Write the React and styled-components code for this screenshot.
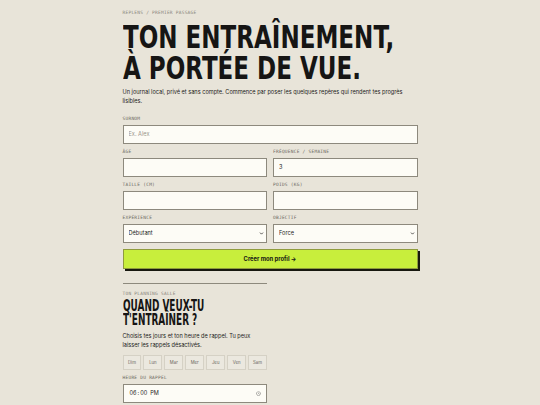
import React from "react";
import styled, { createGlobalStyle } from "styled-components";
import { ChevronDown } from "lucide-react";

const Global = createGlobalStyle`
  html, body { margin: 0; padding: 0; background: #e8e4d9; }
  body { font-family: "Inter", "Noto Sans", sans-serif; color: #161514; }
  * { box-sizing: border-box; }
`;

const Page = styled.main`
  width: 295px;
  margin: 0 auto;
  padding: 10px 0 0;
  display: flex;
  flex-direction: column;
`;

const Eyebrow = styled.div`
  font-family: "DejaVu Sans Mono", "Liberation Mono", monospace;
  font-size: 4.5px;
  line-height: 6px;
  letter-spacing: 0.25px;
  text-transform: uppercase;
  color: ${(p) => p.$color || "#8a867c"};
`;

const Title = styled.h1`
  margin: ${(p) => p.$margin || "0"};
  font-family: "DejaVu Sans Condensed", "DejaVu Sans", sans-serif;
  font-stretch: condensed;
  font-weight: 700;
  font-size: ${(p) => p.$size}px;
  line-height: ${(p) => p.$lh}px;
  white-space: nowrap;
  color: #161514;
  transform: scaleX(${(p) => p.$scale});
  transform-origin: left top;
`;

const Lead = styled.p`
  margin: ${(p) => p.$margin || "0"};
  font-size: 5.6px;
  line-height: 9px;
  color: #1d1c1a;
`;

const Form = styled.form`
  display: grid;
  grid-template-columns: 1fr 1fr;
  column-gap: 6px;
  row-gap: 5px;
  margin-top: 9.5px;
`;

const Field = styled.label`
  display: flex;
  flex-direction: column;
  gap: 3px;
  grid-column: ${(p) => (p.$full ? "1 / -1" : "auto")};
`;

const boxStyles = `
  height: 19px;
  width: 100%;
  border: 1px solid #8d897d;
  background: #fdfcf6;
  font-family: "Inter", "Noto Sans", sans-serif;
  font-size: 5.6px;
  color: #1d1c1a;
  padding: 0 5px;
  border-radius: 0;
  outline: none;
  margin: 0;
`;

const Input = styled.input`
  ${boxStyles}
  &::placeholder { color: #9a968b; }
`;

const SelectWrap = styled.div`
  position: relative;
  display: flex;
`;

const Select = styled.select`
  ${boxStyles}
  appearance: none;
  -webkit-appearance: none;
  padding: 0 10px 0 5px;
`;

const Chevron = styled(ChevronDown)`
  position: absolute;
  right: 3px;
  top: 7px;
  width: 5px;
  height: 5px;
  color: #1d1c1a;
  pointer-events: none;
`;

const TimeInput = styled.input`
  ${boxStyles}
  &::-webkit-calendar-picker-indicator {
    width: 5px;
    height: 5px;
    margin: 0;
    padding: 0;
    opacity: 0.7;
  }
  &::-webkit-datetime-edit { padding: 0; }
`;

const Submit = styled.button`
  grid-column: 1 / -1;
  margin-top: 1px;
  height: 20px;
  border: 1px solid #8f9b3d;
  background: #c8ee3c;
  box-shadow: 2px 2px 0 #17170f;
  font-family: "Inter", "Noto Sans", sans-serif;
  font-weight: 700;
  font-size: 5.8px;
  color: #161514;
  cursor: pointer;
`;

const Rule = styled.hr`
  width: calc(50% - 3px);
  margin: 14px 0 7px;
  border: 0;
  border-top: 1px solid #8d897d;
`;

const Section = styled.section`
  width: calc(50% - 3px);
  display: flex;
  flex-direction: column;
`;

const Days = styled.div`
  display: grid;
  grid-template-columns: repeat(7, 1fr);
  gap: 2px;
  margin-top: 5px;
`;

const Day = styled.button`
  height: 15px;
  padding: 0;
  border: 1px solid #d5d1c5;
  background: #ebe8df;
  font-family: "Inter", "Noto Sans", sans-serif;
  font-size: 4.3px;
  color: #6a665d;
`;

const TimeField = styled.label`
  display: flex;
  flex-direction: column;
  gap: 3px;
  margin-top: 5px;
`;

function SelectBox({ defaultValue, children }) {
  return (
    <SelectWrap>
      <Select defaultValue={defaultValue}>{children}</Select>
      <Chevron strokeWidth={3.5} />
    </SelectWrap>
  );
}

export default function App() {
  return (
    <>
      <Global />
      <Page>
        <Eyebrow>Replens / premier passage</Eyebrow>
        <Title $size={32} $lh={31} $scale={0.8} $margin="6px 0 0">
          TON ENTRAÎNEMENT,
          <br />À PORTÉE DE VUE.
        </Title>
        <Lead $margin="4px 0 0">
          Un journal local, privé et sans compte. Commence par poser les quelques repères qui rendent tes progrès lisibles.
        </Lead>
        <Form onSubmit={(e) => e.preventDefault()}>
          <Field $full>
            <Eyebrow $color="#6b675e">Surnom</Eyebrow>
            <Input placeholder="Ex. Alex" />
          </Field>
          <Field>
            <Eyebrow $color="#6b675e">Âge</Eyebrow>
            <Input />
          </Field>
          <Field>
            <Eyebrow $color="#6b675e">Fréquence / semaine</Eyebrow>
            <Input defaultValue="3" />
          </Field>
          <Field>
            <Eyebrow $color="#6b675e">Taille (cm)</Eyebrow>
            <Input />
          </Field>
          <Field>
            <Eyebrow $color="#6b675e">Poids (kg)</Eyebrow>
            <Input />
          </Field>
          <Field>
            <Eyebrow $color="#6b675e">Expérience</Eyebrow>
            <SelectBox defaultValue="debutant">
              <option value="debutant">Débutant</option>
              <option value="inter">Intermédiaire</option>
              <option value="avance">Avancé</option>
            </SelectBox>
          </Field>
          <Field>
            <Eyebrow $color="#6b675e">Objectif</Eyebrow>
            <SelectBox defaultValue="force">
              <option value="force">Force</option>
              <option value="masse">Masse</option>
              <option value="endurance">Endurance</option>
            </SelectBox>
          </Field>
          <Submit type="submit">Créer mon profil →</Submit>
        </Form>
        <Rule />
        <Section>
          <Eyebrow>Ton planning salle</Eyebrow>
          <Title $size={16} $lh={14.5} $scale={0.62} $margin="2px 0 0">
            QUAND VEUX-TU
            <br />
            T'ENTRAÎNER ?
          </Title>
          <Lead $margin="4px 0 0">
            Choisis tes jours et ton heure de rappel. Tu peux laisser les rappels désactivés.
          </Lead>
          <Days>
            {["Dim", "Lun", "Mar", "Mer", "Jeu", "Ven", "Sam"].map((d) => (
              <Day key={d} type="button">{d}</Day>
            ))}
          </Days>
          <TimeField>
            <Eyebrow $color="#6b675e">Heure du rappel</Eyebrow>
            <TimeInput type="time" defaultValue="18:00" />
          </TimeField>
        </Section>
      </Page>
    </>
  );
}
